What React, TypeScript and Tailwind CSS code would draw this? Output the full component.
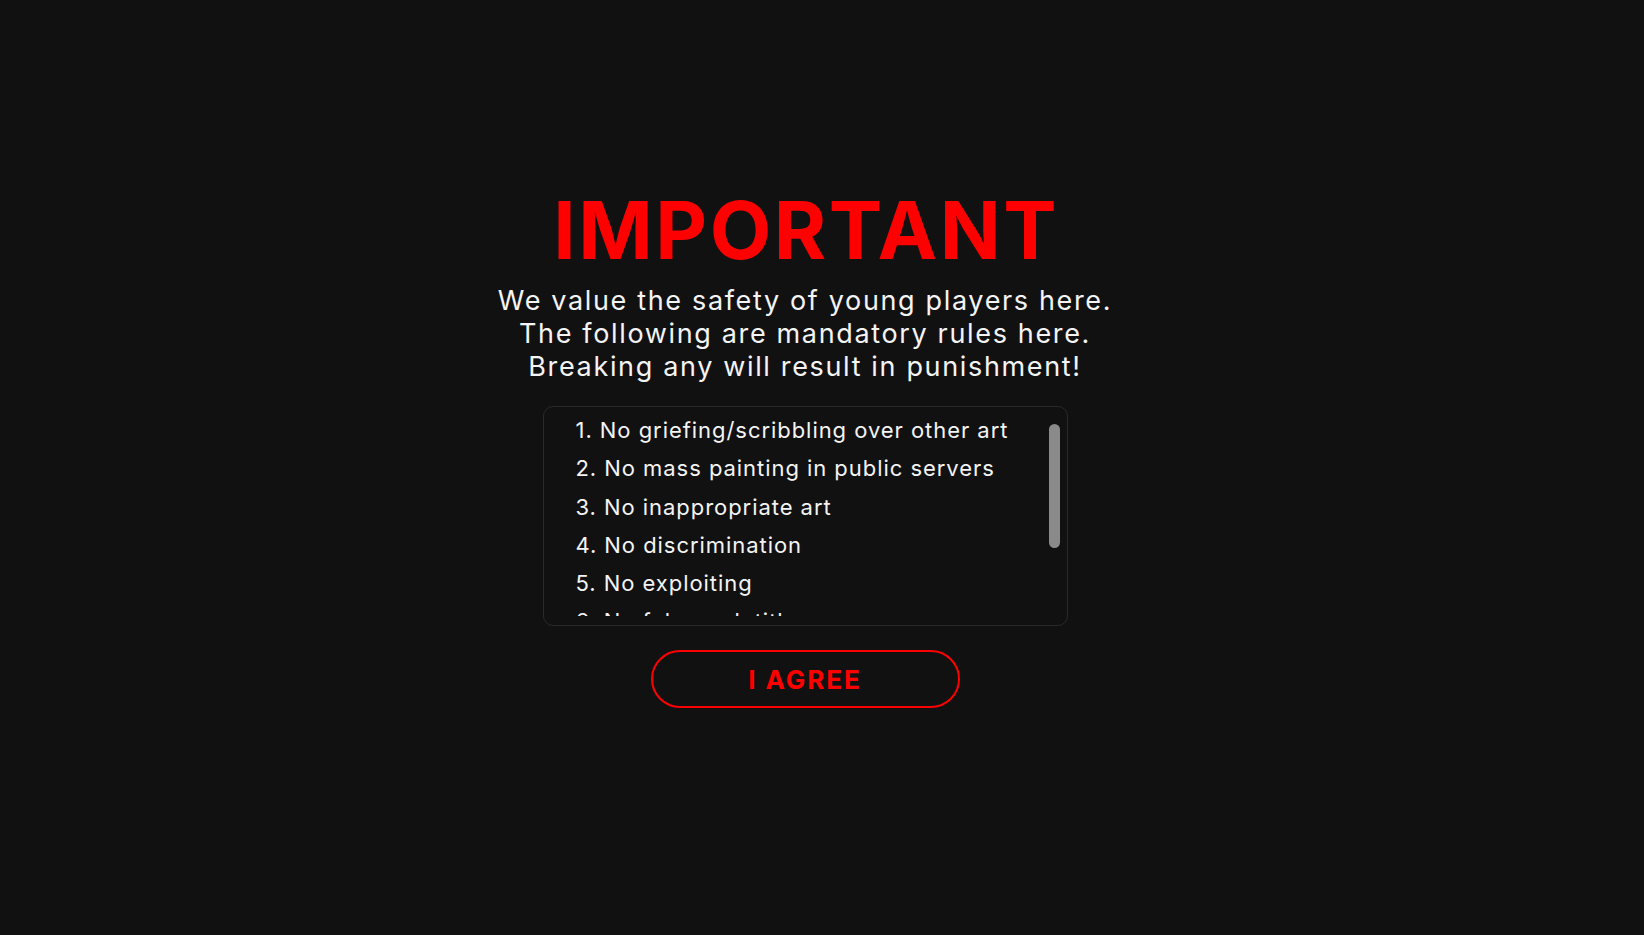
import React from "react";

const rules = [
  "1. No griefing/scribbling over other art",
  "2. No mass painting in public servers",
  "3. No inappropriate art",
  "4. No discrimination",
  "5. No exploiting",
  "6. No fake rank titles",
  "7. No spamming the chat",
  "8. No harassment or bullying",
  "9. Respect all players",
  "10. Have fun!",
];

export default function App() {
  return (
    <div
      className="min-h-[935px] w-full bg-[#111111] flex flex-col items-center pr-[34px] pt-[190px]"
      style={{ fontFamily: "Inter, 'Noto Sans', sans-serif" }}
    >
      <h1 className="text-[80px] leading-[80px] font-bold text-[#ff0000] tracking-[2.5px] mr-[-2.5px]">
        IMPORTANT
      </h1>
      <div className="mt-[14px] text-center text-[27px] leading-[33px] text-[#f4f4f4] font-normal tracking-[1.65px]">
        <p>We value the safety of young players here.</p>
        <p>The following are mandatory rules here.</p>
        <p>Breaking any will result in punishment!</p>
      </div>
      <div className="relative mt-[23px] w-[525px] h-[220px] rounded-[10px] border border-[#2a2a2a] pb-[9px] flex flex-col">
        <div className="flex-1 overflow-hidden">
          <ul className="pl-[32px] pt-[4px] text-[22px] leading-[38.3px] text-[#f4f4f4] tracking-[0.95px]">
            {rules.map((r) => (
              <li key={r} className="whitespace-nowrap">
                {r}
              </li>
            ))}
          </ul>
        </div>
        <div className="absolute right-[7px] top-[17px] w-[11px] h-[124px] rounded-full bg-[#8a8a8a]" />
      </div>
      <button className="mt-[24px] w-[309px] h-[58px] rounded-full border-2 border-[#ff0000] text-[#ff0000] text-[26px] font-bold tracking-[1.9px] flex items-center justify-center">
        I AGREE
      </button>
    </div>
  );
}
